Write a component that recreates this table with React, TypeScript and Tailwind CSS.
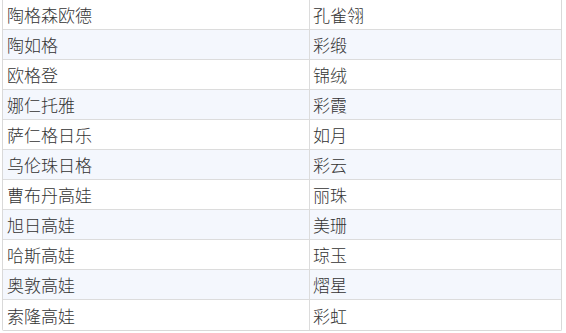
const rows = [
  ['陶格森欧德', '孔雀翎'],
  ['陶如格', '彩缎'],
  ['欧格登', '锦绒'],
  ['娜仁托雅', '彩霞'],
  ['萨仁格日乐', '如月'],
  ['乌伦珠日格', '彩云'],
  ['曹布丹高娃', '丽珠'],
  ['旭日高娃', '美珊'],
  ['哈斯高娃', '琼玉'],
  ['奥敦高娃', '熠星'],
  ['索隆高娃', '彩虹'],
];

export default function App() {
  return (
    <div className="w-[566px] h-[333px] bg-white pl-[2px] font-['Noto_Sans_CJK_SC',sans-serif] text-[17px] font-light text-[#333]">
      <div className="w-[560px] border-x border-b border-[#d9d9d9] rounded-b-[2px]">
        {rows.map(([name, nick], i) => (
          <div
            key={i}
            className={`flex h-[30px] items-center border-b last:border-b-0 border-[#dcdcdc] ${i % 2 === 1 ? 'bg-[#f4f7fd]' : 'bg-white'}`}
          >
            <div className="w-[307px] h-full flex items-center pl-[4px] border-r border-[#dcdcdc] leading-none">{name}</div>
            <div className="flex-1 h-full flex items-center pl-[3px] leading-none">{nick}</div>
          </div>
        ))}
      </div>
    </div>
  );
}
